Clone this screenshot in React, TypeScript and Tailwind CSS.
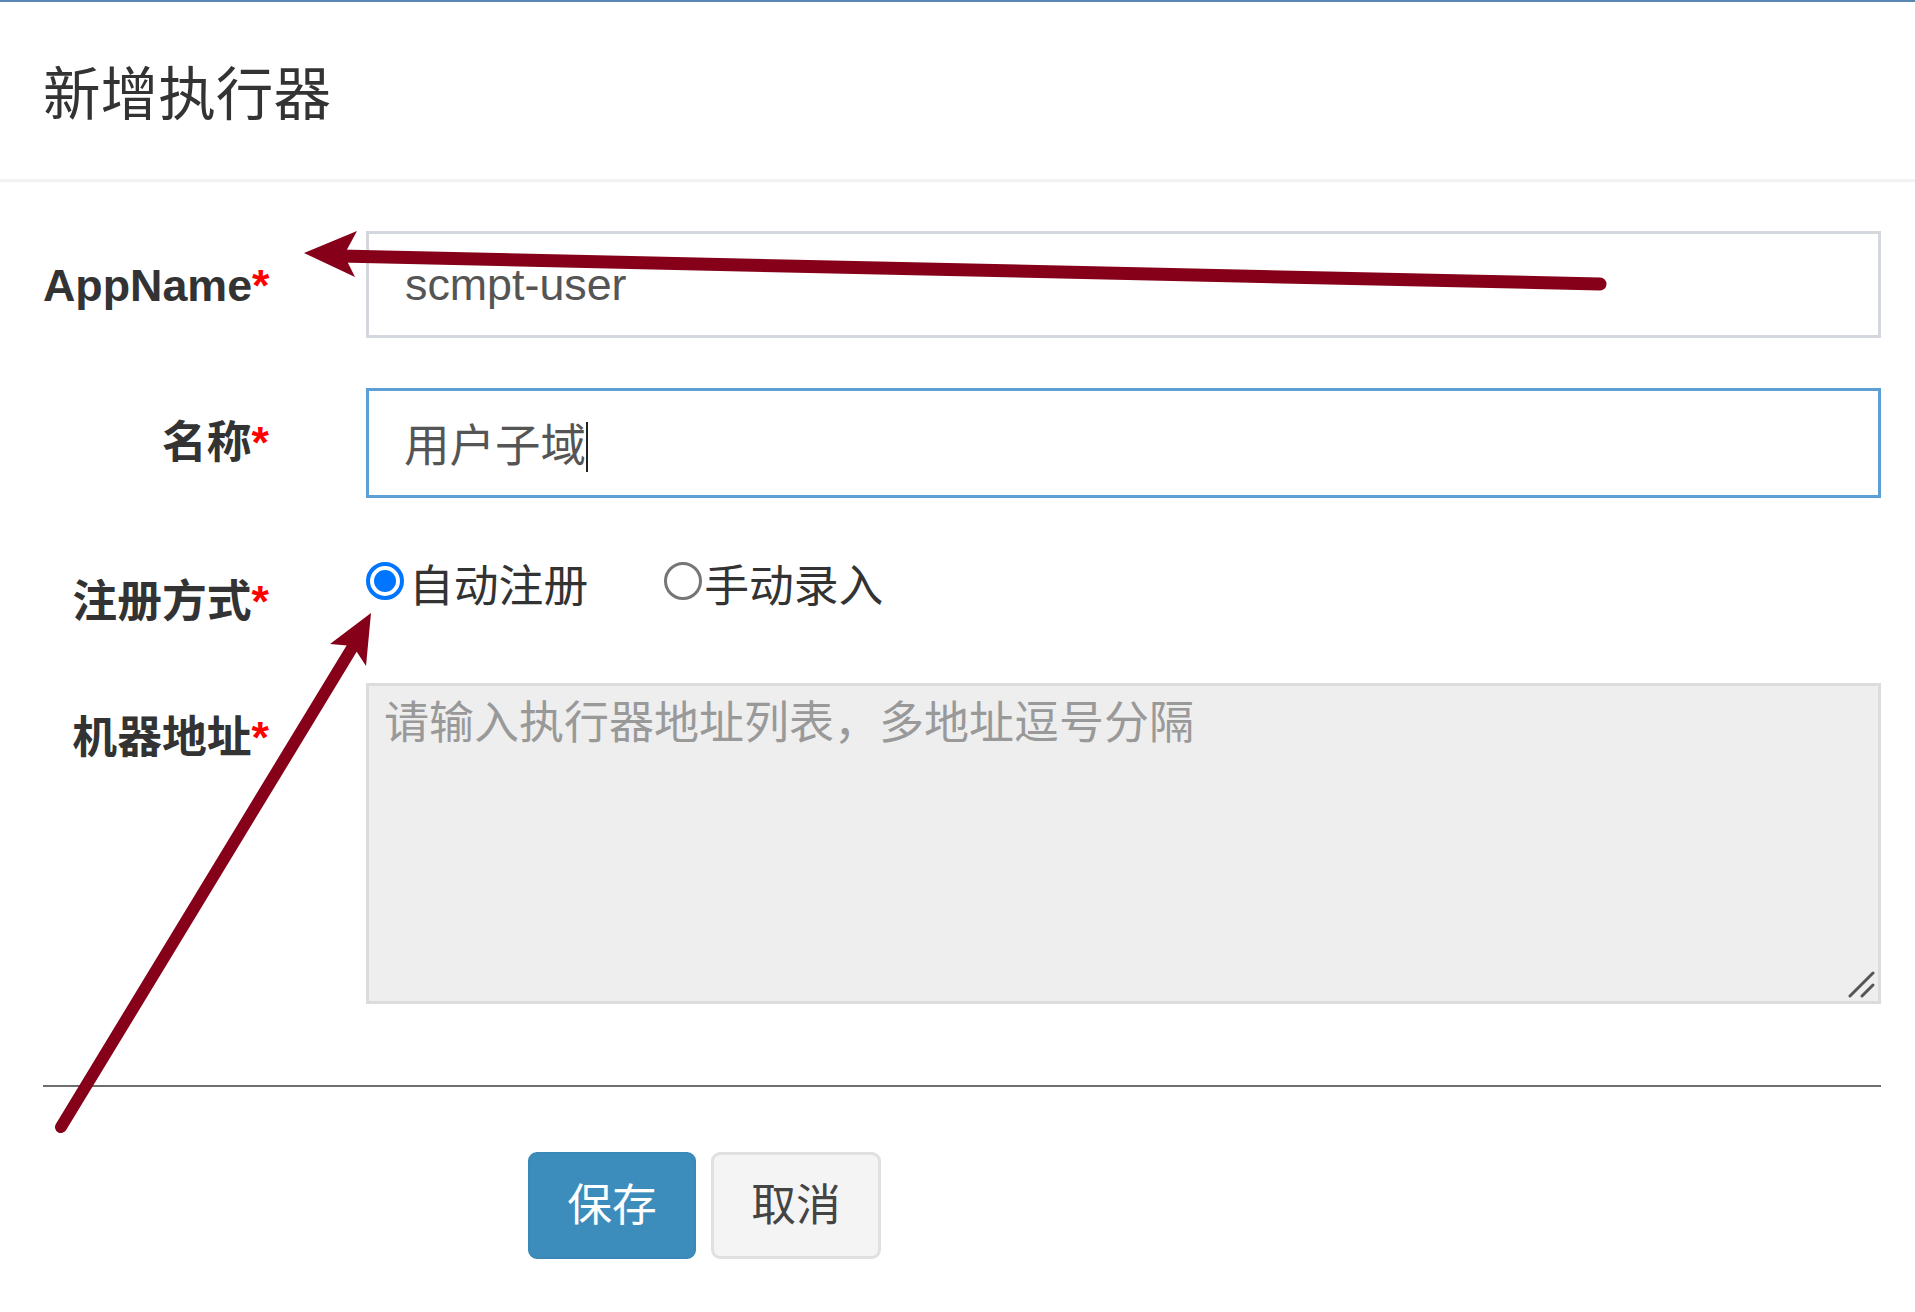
import React from "react"

const labelCls =
  "w-[226px] shrink-0 text-right font-bold text-[44.8px] leading-[64px] pt-[22px] text-[#333]"

function Req() {
  return <span className="text-[#ff0000]">*</span>
}

function Radio({ checked }: { checked: boolean }) {
  if (checked) {
    return (
      <span className="w-[38px] h-[38px] rounded-full border-[4px] border-[#0075ff] bg-white flex items-center justify-center shrink-0">
        <span className="w-[22px] h-[22px] rounded-full bg-[#0075ff]" />
      </span>
    )
  }
  return <span className="w-[38px] h-[38px] rounded-full border-[3px] border-[#767676] bg-white shrink-0" />
}

export default function App() {
  return (
    <div className="relative w-full h-[1312px] bg-white overflow-hidden font-['Liberation_Sans','Noto_Sans_CJK_SC',sans-serif]">
      <div className="h-[2px] bg-[#5a87b3]" />

      {/* header */}
      <div className="px-[43px] pt-[52px] pb-[43px] border-b-[3px] border-[#f2f2f2]">
        <h4 className="text-[57.6px] leading-[82px] text-[#333] font-normal">新增执行器</h4>
      </div>

      {/* form */}
      <div className="pl-[43px] pr-[34px] pt-[49px]">
        <div className="flex gap-[97px] mb-[50px]">
          <label className={labelCls}>
            AppName<Req />
          </label>
          <div className="flex-1 h-[107px] border-[3px] border-[#d4d7dd] flex items-center pl-[36px] text-[44.8px] text-[#555]">
            scmpt-user
          </div>
        </div>

        <div className="flex gap-[97px] mb-[49px]">
          <label className={labelCls}>
            名称<Req />
          </label>
          <div className="flex-1 h-[110px] border-[3px] border-[#5d9fd5] flex items-center pl-[35px] pt-[8px] text-[45.5px] text-[#555]">
            <span>用户子域</span>
            <span className="w-[2px] h-[50px] bg-[#222]" />
          </div>
        </div>

        <div className="flex gap-[97px] mb-[48px] h-[88px]">
          <label className={labelCls}>
            注册方式<Req />
          </label>
          <div className="flex-1 flex items-start pt-[15px] text-[44.8px] text-[#333]">
            <div className="flex items-start">
              <Radio checked />
              <span className="ml-[5px] leading-[52px] -mt-[2px]">自动注册</span>
            </div>
            <div className="flex items-start ml-[76px]">
              <Radio checked={false} />
              <span className="ml-[2px] leading-[52px] -mt-[2px]">手动录入</span>
            </div>
          </div>
        </div>

        <div className="flex gap-[97px]">
          <label className={labelCls}>
            机器地址<Req />
          </label>
          <div className="relative flex-1 h-[321px] border-[3px] border-[#dcdcdc] bg-[#eeeeee] pl-[15px] pt-[6px] text-[45px] leading-[64px] text-[#999]">
            请输入执行器地址列表，多地址逗号分隔
            <svg className="absolute right-[2px] bottom-[2px]" width="28" height="28" viewBox="0 0 28 28">
              <line x1="2" y1="25" x2="25" y2="2" stroke="#555" strokeWidth="3" strokeLinecap="round" />
              <line x1="14" y1="25" x2="25" y2="14" stroke="#555" strokeWidth="3" strokeLinecap="round" />
            </svg>
          </div>
        </div>

        <div className="mt-[81px] h-[2px] bg-[#6e6e6e]" />

        <div className="mt-[65px] ml-[485px] flex gap-[15px]">
          <button className="w-[168px] h-[107px] rounded-[9px] bg-[#3c8dbc] border-[2px] border-[#3a88b6] text-white text-[44.8px]">
            保存
          </button>
          <button className="w-[170px] h-[107px] rounded-[9px] bg-[#f4f4f4] border-[3px] border-[#e0e0e0] text-[#444] text-[44.8px]">
            取消
          </button>
        </div>
      </div>

      {/* annotation arrows */}
      <svg
        className="absolute inset-0 pointer-events-none"
        width="1915"
        height="1312"
        viewBox="0 0 1915 1312"
      >
        <line x1="1600" y1="284" x2="340" y2="256" stroke="#860019" strokeWidth="13" strokeLinecap="round" />
        <polygon points="304,253 357,231 344,255 355,277" fill="#860019" />
        <line x1="61" y1="1127" x2="352" y2="648" stroke="#860019" strokeWidth="12" strokeLinecap="round" />
        <polygon points="371,613 366,666 353,646 330,644" fill="#860019" />
      </svg>
    </div>
  )
}
